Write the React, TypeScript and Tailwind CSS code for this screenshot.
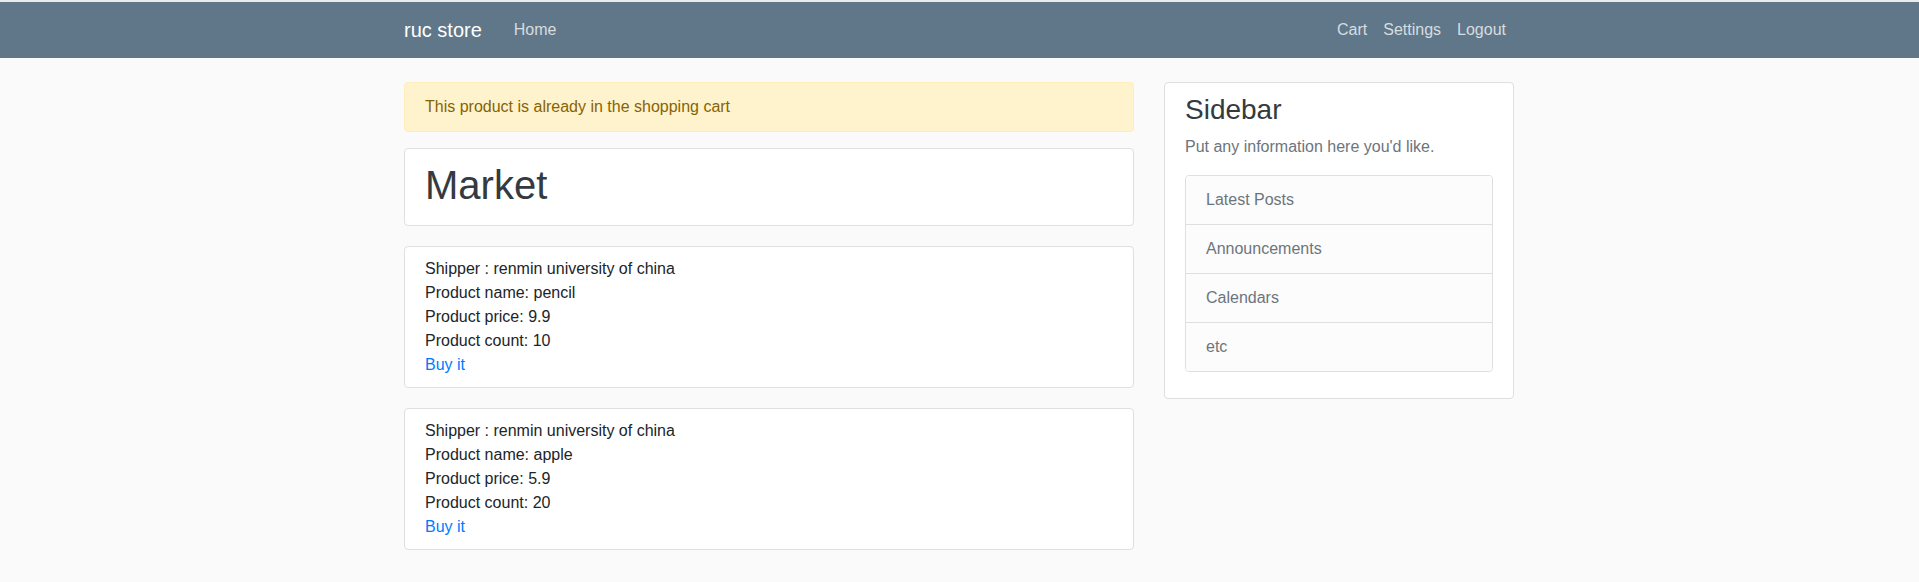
import React from "react";

const products = [
  { shipper: "renmin university of china", name: "pencil", price: "9.9", count: 10 },
  { shipper: "renmin university of china", name: "apple", price: "5.9", count: 20 },
];

const sideLinks = ["Latest Posts", "Announcements", "Calendars", "etc"];

export default function App() {
  return (
    <div
      className="min-h-[582px] bg-[#fafafa] text-[16px] leading-6 text-[#212529]"
      style={{ fontFamily: '"Liberation Sans", Arial, sans-serif' }}
    >
      {/* ナビバー */}
      <div className="h-[2px] bg-[#ececec]" />
      <header className="bg-[#607789]">
        <div className="mx-auto flex h-14 w-[1111px] items-center justify-between pr-px">
          <div className="flex items-center">
            <a href="#" className="mr-6 py-[5px] text-[20px] leading-[30px] text-white">
              ruc store
            </a>
            <a href="#" className="px-2 py-2 text-white/75">
              Home
            </a>
          </div>
          <nav className="flex items-center">
            <a href="#" className="px-2 py-2 text-white/75">
              Cart
            </a>
            <a href="#" className="px-2 py-2 text-white/75">
              Settings
            </a>
            <a href="#" className="px-2 py-2 text-white/75">
              Logout
            </a>
          </nav>
        </div>
      </header>

      <main className="mx-auto mt-6 flex w-[1111px] items-start gap-[30px] pr-px">
        {/* メインカラム */}
        <div className="flex w-[730px] flex-col">
          <div className="mb-4 rounded border border-[#ffeeba] bg-[#fff3cd] px-5 py-3 text-[#856404]">
            This product is already in the shopping cart
          </div>
          <div className="rounded border border-[#dfdfdf] bg-white px-5 pt-3 pb-4">
            <h1 className="text-[40px] leading-[48px] text-[#343a40]">Market</h1>
          </div>
          {products.map((p) => (
            <div
              key={p.name}
              className="mt-5 rounded border border-[#dfdfdf] bg-white px-5 py-2.5"
            >
              <div>Shipper : {p.shipper}</div>
              <div>Product name: {p.name}</div>
              <div>Product price: {p.price}</div>
              <div>Product count: {p.count}</div>
              <a href="#" className="text-[#007bff]">
                Buy it
              </a>
            </div>
          ))}
        </div>

        {/* サイドバー */}
        <aside className="w-[350px] rounded border border-[#dfdfdf] bg-white px-5 py-2.5">
          <h3 className="mb-2 text-[28px] leading-[33.6px] text-[#343a40]">Sidebar</h3>
          <p className="mb-4 text-[#6c757d]">Put any information here you'd like.</p>
          <ul className="mb-4 overflow-hidden rounded border border-[#dfdfdf]">
            {sideLinks.map((l, i) => (
              <li
                key={l}
                className={
                  "bg-[#fcfcfc] px-5 py-3 text-[#6c757d] " +
                  (i > 0 ? "border-t border-[#dfdfdf]" : "")
                }
              >
                {l}
              </li>
            ))}
          </ul>
        </aside>
      </main>
    </div>
  );
}
